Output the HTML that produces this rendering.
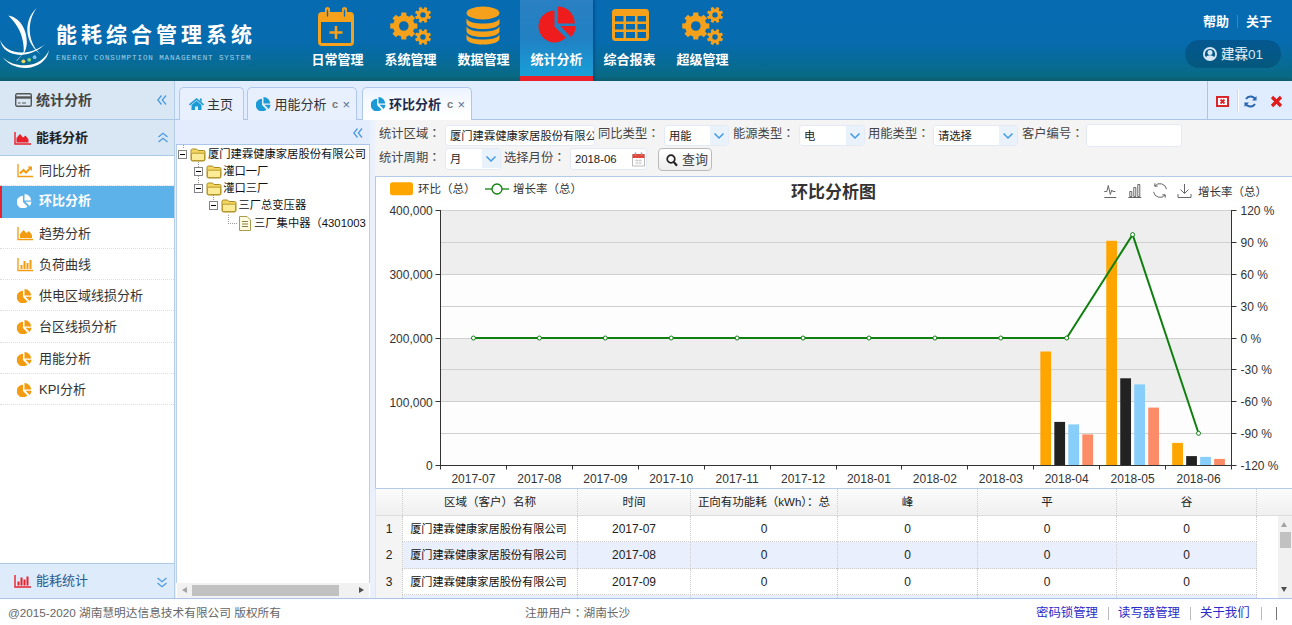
<!DOCTYPE html>
<html lang="zh-CN">
<head>
<meta charset="utf-8">
<title>能耗综合管理系统</title>
<style>
*{box-sizing:border-box;margin:0;padding:0}
html,body{width:1292px;height:625px;overflow:hidden;background:#fff}
body{font-family:"Liberation Sans","Noto Sans CJK SC",sans-serif;font-size:12px;color:#333;position:relative}
.abs{position:absolute}
i,em{font-style:normal}
#hdr{left:0;top:0;width:1292px;height:81px;background:linear-gradient(#066bb1 0,#066baf 50%,#076b9a 75%,#096a84 94%,#0d5c70 100%)}
#hdr .title{left:56px;top:21px;font-size:21px;font-weight:bold;color:#fff;letter-spacing:4px;white-space:nowrap;line-height:28px}
#hdr .sub{left:56px;top:53px;font-size:7.5px;color:#a3cfe8;letter-spacing:.93px;white-space:nowrap;line-height:10px;font-family:"Liberation Mono","Liberation Sans",monospace}
.nav{top:0;height:81px;width:73px;color:#fff;font-size:13px;font-weight:bold}
.nav span{position:absolute;left:0;right:0;top:50px;line-height:20px;text-align:center;white-space:nowrap}
.nav svg{position:absolute;left:50%}
.nav.sel{width:73px;background:linear-gradient(#2a80c3 0,#2181c2 50%,#189fd8 100%);border-bottom:5px solid #e8212a;box-shadow:2px 0 2px rgba(0,40,90,.35)}
.hlinks{left:1203px;top:12px;color:#fff;font-size:13px;font-weight:bold;line-height:20px;white-space:nowrap}
.hlinks i{display:inline-block;width:1px;height:13px;background:#3b86b8;margin:0 8px 0 8px;vertical-align:-2px}
.pill{left:1185px;top:40px;width:96px;height:28px;border-radius:14px;background:rgba(0,45,75,.3);color:#d7e7f3;font-size:13.5px;line-height:30px}
.pill svg{position:absolute;left:18px;top:7px}
.pill b{position:absolute;left:36px;top:0;font-weight:500;white-space:nowrap}
#side{left:0;top:81px;width:175px;height:517px;background:#fff;border-right:1px solid #b5cdec}
.shead{left:0;width:174px;background:#d8e7f3;border-bottom:1px solid #a9c9e8;color:#444;font-weight:bold;font-size:14px;white-space:nowrap}
.sfoot{left:0;top:482px;width:174px;height:35px;background:#deebfb;border-top:1px solid #a9c9e8;color:#2a5a8c;font-size:13px;line-height:34px;padding-left:36px}
.mi{left:0;width:174px;height:31.25px;border-bottom:1px dotted #dcdcdc;font-size:13px;color:#333;line-height:31px;padding-left:39px;white-space:nowrap}
.mi svg{position:absolute;left:17px;top:9px}
.mi.sel{background:#5db2ea;color:#fff;border-left:2px solid #e8212a;border-bottom:none;font-weight:bold;height:31.25px;line-height:30px}
.mi.sel svg{left:15px;top:8px}
.mi.sel{padding-left:37px}
#split1{left:175px;top:81px;width:1px;height:517px;background:#e6eefb}
#tabs{left:175px;top:81px;width:1117px;height:39px;background:#e0ecff;border-bottom:1px solid #a9c6e8}
.tab{top:6px;height:33px;border:1px solid #b0c7ea;border-bottom:none;border-radius:5px 5px 0 0;background:#e9f0fd;font-size:13px;color:#333;line-height:33px;white-space:nowrap}
.tab.sel{background:linear-gradient(#edf3ff,#fff 85%);font-weight:bold;height:34px;color:#1d2b4d}
.tab .ti{position:absolute;line-height:0}
.tab .tl{position:absolute;top:0}
.tab em{position:absolute;top:0;font-weight:bold;color:#777;font-size:11px}
.tab em.tx{font-size:13px;color:#5a6f8f;font-weight:normal}
#treep{left:176px;top:120px;width:194px;height:478px;background:#fff}
.thead{left:0;top:0;width:194px;height:25px;background:#e3ecfc;border-bottom:1px solid #a9c6e8}
.tbody{left:0;top:25px;width:194px;height:438px;border-left:1px solid #b9cfec;border-right:1px solid #b9cfec;overflow:hidden}
.trow{left:0;width:300px;height:17px;line-height:17px;font-size:11.3px;color:#111;white-space:nowrap}
.hsb{left:1px;top:463px;width:192px;height:15px;background:#f1f1f1}
#split2{left:370px;top:120px;width:5px;height:478px;background:#eaf1fc}
#form{left:375px;top:120px;width:917px;height:57px;background:#f4f4f4;border-bottom:1px solid #b4cbe8;padding-left:1px}
.fl{font-size:12.3px;color:#444;line-height:19px;white-space:nowrap}
.cj{font-family:"Liberation Sans","Noto Sans CJK JP",sans-serif}
.fi{background:#fff;border:1px solid #e3eaf5;border-radius:3px;font-size:11.3px;line-height:20px;padding-left:4px;color:#222;white-space:nowrap;overflow:hidden}
.btn{width:54px;height:23px;border:1px solid #bbb;border-radius:4px;background:linear-gradient(#fff,#eee);font-size:13px;line-height:21px;color:#444}
#chartp{left:375px;top:177px;width:917px;height:311px;border-left:1px solid #b4cbe8;background:#fff}
#chart{left:1px;top:0}
#grid{left:375px;top:488px;width:917px;height:110px;background:#fff;border-top:1px solid #b4cbe8;overflow:hidden;border-left:1px solid #dce6f5}
.ghead{left:0;top:0;width:916px;height:27px;background:linear-gradient(#fbfbfb,#f0f0f0);border-bottom:1px solid #ddd}
.gc{top:0;height:27px;line-height:27px;text-align:center;border-right:1px dotted #ccc;font-size:12px;color:#222;white-space:nowrap;overflow:hidden}
.grow{left:0;width:881px;height:26.4px;border-bottom:1px dotted #ccc}
.grow .gc{height:26.4px;line-height:26.4px}
.grow.alt{background:#e9effd}
.grow .rn{background:#f4f4f4}
.grow .gc:nth-child(2){font-size:11.2px;padding-right:3px;color:#111}
.ghead .gc{font-size:11.5px}
.vsb{left:902px;top:27px;width:14px;height:82px;background:#f1f1f1}
#foot{left:0;top:598px;width:1292px;height:27px;background:#fff;border-top:1px solid #a9c6e8;font-size:11.7px;color:#666;line-height:28px;white-space:nowrap}
#foot a{color:#2b2bc9;font-size:12.4px;top:0}
#foot i{top:8px;width:1px;height:13px;background:#bbb}
</style>
</head>
<body>
<div id="hdr" class="abs">
<svg class="abs" style="left:0;top:0" width="56" height="81" viewBox="0 0 56 81"><g fill="#fff"><path d="M8.300 15.400C18.500 17 27.300 28 26.800 43C26.600 47.500 25.400 51 23.600 53.800C24 49 23.600 46 23 42C21.200 30.500 15.500 22.500 8.300 15.400Z"/><path d="M36.800 8C29.700 14 27 23 27.300 31C27.700 41 34 50.500 43.500 56.500C36 51.500 30.200 42 29.800 31C29.500 23 31.700 14.500 36.800 8Z" opacity=".95"/><path d="M0.200 40C3 47.500 11 52.300 21 52.600C30 52.800 38 49.500 45.500 44C38.500 50.500 30 54.600 21 54.900C9.500 55 1.500 49 0.200 40Z"/><path d="M2.800 57.300C9 63.500 18 65.800 26 65.300C37 64.600 45.500 59 49 50C47.500 60.500 38 67.300 26.500 67.900C17 68.300 8 64.500 2.800 57.300Z"/><path d="M23.800 51.500C21.500 55 19 58 16.400 60.500L16.900 60.900C19.500 58 22 55 24.400 51.700Z" opacity=".8"/></g><circle cx="23.400" cy="61.300" r="1.900" fill="#f3d75a"/><circle cx="29.200" cy="59.800" r="1.900" fill="#86d67a"/><circle cx="34.600" cy="57.200" r="1.900" fill="#79c4f2"/></svg>
<div class="abs title">能耗综合管理系统</div>
<div class="abs sub">ENERGY CONSUMPTION MANAGEMENT SYSTEM</div>
<div class="abs nav" style="left:301px"><svg width="36" height="39" viewBox="0 0 36 39" style="margin-left:-20px;top:7px"><g fill="none" stroke="#f5a11c"><rect x="1.5" y="6.5" width="33" height="31" rx="2.5" stroke-width="3"/><path d="M1.5 11.5H34.5" stroke-width="7"/><path d="M9.5 2.5V9.5M26.5 2.5V9.5" stroke-width="5" stroke-linecap="round"/><path d="M18 19v13M11.5 25.5h13" stroke-width="2.6"/></g><path d="M9.5 3.2V9M26.5 3.2V9" stroke="#0a6db5" stroke-width="1.4" stroke-linecap="round"/></svg><span>日常管理</span></div>
<div class="abs nav" style="left:374px"><svg width="42" height="38" viewBox="0 0 42 38" style="margin-left:-21px;top:7px"><path fill-rule="evenodd" fill="#f5a11c" d="M24.26 16.31 L27.37 16.52 L27.37 21.48 L24.26 21.69 L23.10 24.50 L25.15 26.84 L21.64 30.35 L19.30 28.30 L16.49 29.46 L16.28 32.57 L11.32 32.57 L11.11 29.46 L8.30 28.30 L5.96 30.35 L2.45 26.84 L4.50 24.50 L3.34 21.69 L0.23 21.48 L0.23 16.52 L3.34 16.31 L4.50 13.50 L2.45 11.16 L5.96 7.65 L8.30 9.70 L11.11 8.54 L11.32 5.43 L16.28 5.43 L16.49 8.54 L19.30 9.70 L21.64 7.65 L25.15 11.16 L23.10 13.50Z M18.60 19.00 A4.80 4.80 0 1 0 9.00 19.00 A4.80 4.80 0 1 0 18.60 19.00 Z M39.04 8.76 L41.02 9.62 L39.89 12.35 L37.88 11.56 L36.66 12.78 L37.45 14.79 L34.72 15.92 L33.86 13.94 L32.14 13.94 L31.28 15.92 L28.55 14.79 L29.34 12.78 L28.12 11.56 L26.11 12.35 L24.98 9.62 L26.96 8.76 L26.96 7.04 L24.98 6.18 L26.11 3.45 L28.12 4.24 L29.34 3.02 L28.55 1.01 L31.28 -0.12 L32.14 1.86 L33.86 1.86 L34.72 -0.12 L37.45 1.01 L36.66 3.02 L37.88 4.24 L39.89 3.45 L41.02 6.18 L39.04 7.04Z M35.70 7.90 A2.70 2.70 0 1 0 30.30 7.90 A2.70 2.70 0 1 0 35.70 7.90 Z M39.04 30.86 L41.02 31.72 L39.89 34.45 L37.88 33.66 L36.66 34.88 L37.45 36.89 L34.72 38.02 L33.86 36.04 L32.14 36.04 L31.28 38.02 L28.55 36.89 L29.34 34.88 L28.12 33.66 L26.11 34.45 L24.98 31.72 L26.96 30.86 L26.96 29.14 L24.98 28.28 L26.11 25.55 L28.12 26.34 L29.34 25.12 L28.55 23.11 L31.28 21.98 L32.14 23.96 L33.86 23.96 L34.72 21.98 L37.45 23.11 L36.66 25.12 L37.88 26.34 L39.89 25.55 L41.02 28.28 L39.04 29.14Z M35.70 30.00 A2.70 2.70 0 1 0 30.30 30.00 A2.70 2.70 0 1 0 35.70 30.00 Z"/></svg><span>系统管理</span></div>
<div class="abs nav" style="left:447px"><svg width="34" height="39" viewBox="0 0 34 39" style="margin-left:-18px;top:6px"><g fill="#f5a11c"><ellipse cx="17" cy="7" rx="16.5" ry="6.5"/><path d="M0.5 12.5c2 4 9 5 16.500 5s14.500-1 16.500-5v5c-1 4-9 5.500-16.500 5.500s-15.500-1.500-16.500-5.500z"/><path d="M0.500 20.500c2 4 9 5 16.500 5s14.500-1 16.500-5v5c-1 4-9 5.500-16.500 5.500s-15.500-1.500-16.500-5.500z"/><path d="M0.500 28.500c2 4 9 5 16.500 5s14.500-1 16.500-5v4.500c-1 4-9 5.500-16.500 5.500s-15.500-1.500-16.500-5.500z"/></g></svg><span>数据管理</span></div>
<div class="abs nav sel" style="left:520px"><svg width="39" height="37" viewBox="0 0 39 37" style="margin-left:-19px;top:6px"><g fill="#ee1c1c"><path d="M16.500 4.500V20.500L27.800 31.800A16 16 0 1 1 16.500 4.500z"/><path d="M19.800 0.400A17 17 0 0 1 36.800 17.400H19.800z"/><path d="M22.300 20H37.800A16 16 0 0 1 33 31z"/></g></svg><span>统计分析</span></div>
<div class="abs nav" style="left:593px"><svg width="37" height="32" viewBox="0 0 37 32" style="margin-left:-18px;top:9px"><path fill-rule="evenodd" fill="#f5a11c" d="M3.500 0h30a3.500 3.500 0 0 1 3.500 3.500v25a3.500 3.500 0 0 1-3.500 3.500h-30a3.500 3.500 0 0 1-3.500-3.500v-25a3.500 3.500 0 0 1 3.500-3.500z M3 7h8.500v5.500h-8.500z M14 7h9v5.500h-9z M25.500 7h8.500v5.500h-8.500z M3 15h8.500v5.500h-8.500z M14 15h9v5.500h-9z M25.500 15h8.500v5.500h-8.500z M3 23h8.500v6h-8.500z M14 23h9v6h-9z M25.500 23h8.500v6h-8.500z"/></svg><span>综合报表</span></div>
<div class="abs nav" style="left:666px"><svg width="42" height="38" viewBox="0 0 42 38" style="margin-left:-21px;top:7px"><path fill-rule="evenodd" fill="#f5a11c" d="M24.26 16.31 L27.37 16.52 L27.37 21.48 L24.26 21.69 L23.10 24.50 L25.15 26.84 L21.64 30.35 L19.30 28.30 L16.49 29.46 L16.28 32.57 L11.32 32.57 L11.11 29.46 L8.30 28.30 L5.96 30.35 L2.45 26.84 L4.50 24.50 L3.34 21.69 L0.23 21.48 L0.23 16.52 L3.34 16.31 L4.50 13.50 L2.45 11.16 L5.96 7.65 L8.30 9.70 L11.11 8.54 L11.32 5.43 L16.28 5.43 L16.49 8.54 L19.30 9.70 L21.64 7.65 L25.15 11.16 L23.10 13.50Z M18.60 19.00 A4.80 4.80 0 1 0 9.00 19.00 A4.80 4.80 0 1 0 18.60 19.00 Z M39.04 8.76 L41.02 9.62 L39.89 12.35 L37.88 11.56 L36.66 12.78 L37.45 14.79 L34.72 15.92 L33.86 13.94 L32.14 13.94 L31.28 15.92 L28.55 14.79 L29.34 12.78 L28.12 11.56 L26.11 12.35 L24.98 9.62 L26.96 8.76 L26.96 7.04 L24.98 6.18 L26.11 3.45 L28.12 4.24 L29.34 3.02 L28.55 1.01 L31.28 -0.12 L32.14 1.86 L33.86 1.86 L34.72 -0.12 L37.45 1.01 L36.66 3.02 L37.88 4.24 L39.89 3.45 L41.02 6.18 L39.04 7.04Z M35.70 7.90 A2.70 2.70 0 1 0 30.30 7.90 A2.70 2.70 0 1 0 35.70 7.90 Z M39.04 30.86 L41.02 31.72 L39.89 34.45 L37.88 33.66 L36.66 34.88 L37.45 36.89 L34.72 38.02 L33.86 36.04 L32.14 36.04 L31.28 38.02 L28.55 36.89 L29.34 34.88 L28.12 33.66 L26.11 34.45 L24.98 31.72 L26.96 30.86 L26.96 29.14 L24.98 28.28 L26.11 25.55 L28.12 26.34 L29.34 25.12 L28.55 23.11 L31.28 21.98 L32.14 23.96 L33.86 23.96 L34.72 21.98 L37.45 23.11 L36.66 25.12 L37.88 26.34 L39.89 25.55 L41.02 28.28 L39.04 29.14Z M35.70 30.00 A2.70 2.70 0 1 0 30.30 30.00 A2.70 2.70 0 1 0 35.70 30.00 Z"/></svg><span>超级管理</span></div>

<div class="abs hlinks"><span>帮助</span><i></i><span>关于</span></div>
<div class="abs pill"><svg width="14" height="14" viewBox="0 0 14 14"><path fill-rule="evenodd" fill="#d7e7f3" d="M7 0a7 7 0 1 1 0 14a7 7 0 0 1 0-14z M7 1.900a5.100 5.100 0 0 0-4 8.300c0.800-1.200 2.300-1.900 4-1.900s3.200 0.700 4 1.900a5.100 5.100 0 0 0-4-8.300z M7 3a2.500 2.500 0 1 1 0 5a2.500 2.500 0 0 1 0-5z"/></svg><b>建霖01</b></div>
</div>
<div id="side" class="abs">
<div class="abs shead" style="top:0;height:39px;line-height:38px;padding-left:36px"><svg class="abs" style="left:15px;top:12px" width="17" height="14" viewBox="0 0 17 14"><rect x=".7" y=".7" width="15.600" height="12.600" rx="1.500" fill="none" stroke="#555" stroke-width="1.400"/><path d="M1 4.500h15" stroke="#555" stroke-width="2.400"/><path d="M3 10h2.500M7 10h4" stroke="#555" stroke-width="1.200"/></svg>统计分析<svg class="abs" style="left:157px;top:14px" width="10" height="10" viewBox="0 0 10 10"><path d="M4.500 .5L.8 5l3.700 4.500M9 .5L5.300 5 9 9.500" fill="none" stroke="#4d9be0" stroke-width="1.300"/></svg></div>
<div class="abs shead" style="top:39px;height:36px;line-height:35px;padding-left:36px;font-size:13px;color:#222"><svg class="abs" style="left:14px;top:12px" width="17" height="13" viewBox="0 0 17 13"><path d="M1 0v12h16" fill="none" stroke="#e8212a" stroke-width="1.400"/><path d="M2.500 10.500v-4.500l3.500-4 3 3.500 2.500-2 3 4v3z" fill="#e8212a"/></svg>能耗分析<svg class="abs" style="left:158px;top:12px" width="10" height="11" viewBox="0 0 10 11"><path d="M.5 5L5 1.300 9.500 5M.5 10L5 6.300 9.500 10" fill="none" stroke="#4d9be0" stroke-width="1.300"/></svg></div>
<div class="abs mi" style="top:74.00px"><svg width="16" height="14" viewBox="0 0 16 14"><path d="M1 0v12.500h15" fill="none" stroke="#f39c12" stroke-width="1.300"/><path d="M3 9.500l3.500-3.500 2.500 2.500 4.500-4.500" fill="none" stroke="#f39c12" stroke-width="2"/><path d="M10.500 2.500h4.500v4.500z" fill="#f39c12"/></svg>同比分析</div>
<div class="abs mi sel" style="top:105.25px"><svg width="15" height="14" viewBox="0 0 15 14"><g fill="#fff"><path d="M6 1.700V8l4.500 4.400A6.300 6.300 0 1 1 6 1.700z"/><path d="M7.500 0A6.700 6.700 0 0 1 14.200 6.600H7.500z"/><path d="M8.500 7.800h6A6.300 6.300 0 0 1 12.600 12z"/></g></svg>环比分析</div>
<div class="abs mi" style="top:136.50px"><svg width="16" height="14" viewBox="0 0 16 14"><path d="M1 0v12.500h15" fill="none" stroke="#f39c12" stroke-width="1.300"/><path d="M3 11v-4l3.500-4 3 3 2.500-2 3 4v3z" fill="#f39c12"/></svg>趋势分析</div>
<div class="abs mi" style="top:167.75px"><svg width="16" height="14" viewBox="0 0 16 14"><path d="M1 0v12.500h15" fill="none" stroke="#f39c12" stroke-width="1.300"/><path d="M3.500 11v-4h2v4zM6.500 11v-8h2v8zM9.500 11v-6h2v6zM12.500 11v-9h2v9z" fill="#f39c12"/></svg>负荷曲线</div>
<div class="abs mi" style="top:199.00px"><svg width="15" height="14" viewBox="0 0 15 14"><g fill="#f39c12"><path d="M6 1.700V8l4.500 4.400A6.300 6.300 0 1 1 6 1.700z"/><path d="M7.500 0A6.700 6.700 0 0 1 14.200 6.600H7.500z"/><path d="M8.500 7.800h6A6.300 6.300 0 0 1 12.600 12z"/></g></svg>供电区域线损分析</div>
<div class="abs mi" style="top:230.25px"><svg width="15" height="14" viewBox="0 0 15 14"><g fill="#f39c12"><path d="M6 1.700V8l4.500 4.400A6.300 6.300 0 1 1 6 1.700z"/><path d="M7.500 0A6.700 6.700 0 0 1 14.200 6.600H7.500z"/><path d="M8.500 7.800h6A6.300 6.300 0 0 1 12.600 12z"/></g></svg>台区线损分析</div>
<div class="abs mi" style="top:261.50px"><svg width="15" height="14" viewBox="0 0 15 14"><g fill="#f39c12"><path d="M6 1.700V8l4.500 4.400A6.300 6.300 0 1 1 6 1.700z"/><path d="M7.500 0A6.700 6.700 0 0 1 14.200 6.600H7.500z"/><path d="M8.500 7.800h6A6.300 6.300 0 0 1 12.600 12z"/></g></svg>用能分析</div>
<div class="abs mi" style="top:292.75px"><svg width="15" height="14" viewBox="0 0 15 14"><g fill="#f39c12"><path d="M6 1.700V8l4.500 4.400A6.300 6.300 0 1 1 6 1.700z"/><path d="M7.500 0A6.700 6.700 0 0 1 14.200 6.600H7.500z"/><path d="M8.500 7.800h6A6.300 6.300 0 0 1 12.600 12z"/></g></svg>KPI分析</div>
<div class="abs sfoot"><svg class="abs" style="left:14px;top:11px" width="17" height="13" viewBox="0 0 17 13"><path d="M1 0v12h16" fill="none" stroke="#e8212a" stroke-width="1.400"/><path d="M3.500 10.500v-4h2v4zM6.500 10.500v-8h2v8zM9.500 10.500v-6h2v6zM12.500 10.500v-9h2v9z" fill="#e8212a"/></svg>能耗统计<svg class="abs" style="left:157px;top:13px" width="10" height="11" viewBox="0 0 10 11"><path d="M.5 1L5 4.700 9.500 1M.5 6L5 9.700 9.500 6" fill="none" stroke="#4d9be0" stroke-width="1.300"/></svg></div>
</div>
<div id="split1" class="abs"></div>
<div id="tabs" class="abs">
<div class="abs tab" style="left:4px;width:65px"><span class="ti" style="left:9px;top:10px"><svg width="15" height="12" viewBox="0 0 15 12"><path fill="#1c9ad6" d="M7.500 0l7.500 6.300-1 1.100L7.500 2 1 7.400 0 6.300z M7.500 2.800l5 4.200v5h-3.500v-3.500h-3v3.500H2.500V7z M10.800 .6h1.900v3.300l-1.900-1.600z"/></svg></span><span class="tl" style="left:27px">主页</span></div>
<div class="abs tab" style="left:72px;width:110px"><span class="ti" style="left:8px;top:9px"><svg width="15" height="14" viewBox="0 0 15 14"><g fill="#1c9ad6"><path d="M6 1.700V8l4.500 4.400A6.300 6.300 0 1 1 6 1.700z"/><path d="M7.500 0A6.700 6.700 0 0 1 14.200 6.600H7.500z"/><path d="M8.500 7.800h6A6.300 6.300 0 0 1 12.600 12z"/></g></svg></span><span class="tl" style="left:26.500px">用能分析</span><em class="tt" style="left:84px">c</em><em class="tx" style="left:94.500px">×</em></div>
<div class="abs tab sel" style="left:187px;width:110px"><span class="ti" style="left:8px;top:9px"><svg width="15" height="14" viewBox="0 0 15 14"><g fill="#1c9ad6"><path d="M6 1.700V8l4.500 4.400A6.300 6.300 0 1 1 6 1.700z"/><path d="M7.500 0A6.700 6.700 0 0 1 14.200 6.600H7.500z"/><path d="M8.500 7.800h6A6.300 6.300 0 0 1 12.600 12z"/></g></svg></span><span class="tl" style="left:26px">环比分析</span><em class="tt" style="left:84px">c</em><em class="tx" style="left:94.500px">×</em></div>
<div class="abs" style="left:1032px;top:0;width:85px;height:38px;border-left:1px solid #a9c6e8;background:#e0ecff"></div><svg class="abs" style="left:1041px;top:15px" width="13" height="11" viewBox="0 0 13 11"><rect x="1" y="1" width="11" height="9" fill="#fff" stroke="#d9262c" stroke-width="2"/><path d="M4.500 3.500l4 4M8.500 3.500l-4 4" stroke="#d9262c" stroke-width="1.800"/></svg><div class="abs" style="left:1062px;top:9px;width:1px;height:22px;background:#fff;border-left:1px solid #cfdcf0;box-sizing:content-box"></div><svg class="abs" style="left:1069px;top:14px" width="13" height="13" viewBox="0 0 13 13"><g fill="none" stroke="#2c66ae" stroke-width="2"><path d="M11.500 5A5.300 5.300 0 0 0 2 4"/><path d="M1.500 8A5.300 5.300 0 0 0 11 9"/></g><path d="M12.500 1v4.500H8z M.5 12V7.500H5z" fill="#2c66ae"/></svg><svg class="abs" style="left:1095px;top:14px" width="13" height="13" viewBox="0 0 13 13"><path d="M2 2l9 9M11 2l-9 9" stroke="#e01b1b" stroke-width="3.200"/></svg></div>
<div id="treep" class="abs">
<div class="abs thead"><svg class="abs" style="left:177px;top:8px" width="10" height="10" viewBox="0 0 10 10"><path d="M4.500 .5L.8 5l3.700 4.500M9 .5L5.300 5 9 9.500" fill="none" stroke="#4d9be0" stroke-width="1.300"/></svg></div>
<div class="abs tbody">
<i class="abs" style="left:5.5px;top:-6px;height:9px;border-left:1px dotted #999"></i><i class="abs" style="left:20.5px;top:14px;height:28px;border-left:1px dotted #999"></i><i class="abs" style="left:36px;top:49px;height:8px;border-left:1px dotted #999"></i><div class="abs trow" style="top:0.8px"><svg class="abs" style="left:1.4px;top:4px" width="9" height="9" viewBox="0 0 9 9"><rect x=".5" y=".5" width="8" height="8" fill="#fff" stroke="#848484"/><path d="M2 4.500h5" stroke="#000" stroke-width="1"/></svg><svg class="abs" style="left:13.4px;top:1px" width="16" height="15" viewBox="0 0 16 15"><path d="M1 3.500a1.500 1.500 0 0 1 1.500-1.500h4l1.500 1.500h5.500a1.500 1.500 0 0 1 1.500 1.500v7.500a1.500 1.500 0 0 1-1.500 1.500h-11a1.500 1.500 0 0 1-1.500-1.500z" fill="#f3d561" stroke="#a98a1c" stroke-width="1"/><path d="M1.500 7.500a1.300 1.300 0 0 1 1.300-1.300h10.400a1.300 1.300 0 0 1 1.300 1.300v4.700a1.300 1.300 0 0 1-1.300 1.300h-10.400a1.300 1.300 0 0 1-1.300-1.300z" fill="#fbea96" stroke="#a98a1c" stroke-width=".8"/></svg><span class="abs" style="left:31.0px">厦门建霖健康家居股份有限公司</span></div>
<div class="abs trow" style="top:18.0px"><svg class="abs" style="left:16.6px;top:4px" width="9" height="9" viewBox="0 0 9 9"><rect x=".5" y=".5" width="8" height="8" fill="#fff" stroke="#848484"/><path d="M2 4.500h5" stroke="#000" stroke-width="1"/></svg><svg class="abs" style="left:28.6px;top:1px" width="16" height="15" viewBox="0 0 16 15"><path d="M1 3.500a1.500 1.500 0 0 1 1.500-1.500h4l1.500 1.500h5.500a1.500 1.500 0 0 1 1.500 1.500v7.500a1.500 1.500 0 0 1-1.500 1.500h-11a1.500 1.500 0 0 1-1.500-1.500z" fill="#f3d561" stroke="#a98a1c" stroke-width="1"/><path d="M1.500 7.500a1.300 1.300 0 0 1 1.300-1.300h10.400a1.300 1.300 0 0 1 1.300 1.300v4.700a1.300 1.300 0 0 1-1.300 1.300h-10.400a1.300 1.300 0 0 1-1.300-1.300z" fill="#fbea96" stroke="#a98a1c" stroke-width=".8"/></svg><span class="abs" style="left:46.2px">灌口一厂</span></div>
<div class="abs trow" style="top:35.2px"><svg class="abs" style="left:16.6px;top:4px" width="9" height="9" viewBox="0 0 9 9"><rect x=".5" y=".5" width="8" height="8" fill="#fff" stroke="#848484"/><path d="M2 4.500h5" stroke="#000" stroke-width="1"/></svg><svg class="abs" style="left:28.6px;top:1px" width="16" height="15" viewBox="0 0 16 15"><path d="M1 3.500a1.500 1.500 0 0 1 1.500-1.500h4l1.500 1.500h5.500a1.500 1.500 0 0 1 1.500 1.500v7.500a1.500 1.500 0 0 1-1.500 1.500h-11a1.500 1.500 0 0 1-1.500-1.500z" fill="#f3d561" stroke="#a98a1c" stroke-width="1"/><path d="M1.500 7.500a1.300 1.300 0 0 1 1.300-1.300h10.400a1.300 1.300 0 0 1 1.300 1.300v4.700a1.300 1.300 0 0 1-1.300 1.300h-10.400a1.300 1.300 0 0 1-1.300-1.300z" fill="#fbea96" stroke="#a98a1c" stroke-width=".8"/></svg><span class="abs" style="left:46.2px">灌口三厂</span></div>
<div class="abs trow" style="top:52.4px"><svg class="abs" style="left:31.8px;top:4px" width="9" height="9" viewBox="0 0 9 9"><rect x=".5" y=".5" width="8" height="8" fill="#fff" stroke="#848484"/><path d="M2 4.500h5" stroke="#000" stroke-width="1"/></svg><svg class="abs" style="left:43.8px;top:1px" width="16" height="15" viewBox="0 0 16 15"><path d="M1 3.500a1.500 1.500 0 0 1 1.500-1.500h4l1.500 1.500h5.500a1.500 1.500 0 0 1 1.500 1.500v7.500a1.500 1.500 0 0 1-1.500 1.500h-11a1.500 1.500 0 0 1-1.500-1.500z" fill="#f3d561" stroke="#a98a1c" stroke-width="1"/><path d="M1.500 7.500a1.300 1.300 0 0 1 1.300-1.300h10.400a1.300 1.300 0 0 1 1.300 1.300v4.700a1.300 1.300 0 0 1-1.300 1.300h-10.400a1.300 1.300 0 0 1-1.300-1.300z" fill="#fbea96" stroke="#a98a1c" stroke-width=".8"/></svg><span class="abs" style="left:61.4px">三厂总变压器</span></div>
<div class="abs trow" style="top:69.6px"><i class="abs" style="left:51.0px;top:0;height:9px;border-left:1px dotted #999;width:9px;border-bottom:1px dotted #999"></i><svg class="abs" style="left:61.5px;top:1px" width="12" height="15" viewBox="0 0 12 15"><path d="M.5 .5h7.500l3.500 3.500v10.500h-11z" fill="#fffbe0" stroke="#a89c50" stroke-width="1"/><path d="M3 5.500h6M3 8h6M3 10.500h6" stroke="#8a8250" stroke-width="1"/></svg><span class="abs" style="left:77.0px">三厂集中器（4301003</span></div>
</div>
<div class="abs hsb"><b class="abs" style="left:5px;top:4px;border:3.500px solid transparent;border-right:5px solid #a3a3a3;border-left:none"></b><i class="abs" style="left:15px;top:2px;width:147px;height:11px;background:#c1c1c1"></i><b class="abs" style="left:182px;top:4px;border:3.500px solid transparent;border-left:5px solid #505050;border-right:none"></b></div>
</div>
<div id="split2" class="abs"></div>
<div id="form" class="abs">
<span class="abs fl" style="left:4px;top:5px">统计区域<span class="cj" lang="ja">：</span></span><span class="abs fi" style="left:70px;top:5px;width:150px;height:21px">厦门建霖健康家居股份有限公</span><span class="abs fl" style="left:223px;top:5px">同比类型<span class="cj" lang="ja">：</span></span><span class="abs fi" style="left:289px;top:5px;width:65px;height:21px">用能<svg class="abs" style="right:0;top:0" width="18" height="19" viewBox="0 0 18 19"><rect width="18" height="19" fill="#e9f1fb"/><path d="M4.500 7.500l4.500 4.500 4.500-4.500" fill="none" stroke="#3f9ae6" stroke-width="1.500"/></svg></span><span class="abs fl" style="left:358px;top:5px">能源类型<span class="cj" lang="ja">：</span></span><span class="abs fi" style="left:424px;top:5px;width:66px;height:21px">电<svg class="abs" style="right:0;top:0" width="18" height="19" viewBox="0 0 18 19"><rect width="18" height="19" fill="#e9f1fb"/><path d="M4.500 7.500l4.500 4.500 4.500-4.500" fill="none" stroke="#3f9ae6" stroke-width="1.500"/></svg></span><span class="abs fl" style="left:493px;top:5px">用能类型<span class="cj" lang="ja">：</span></span><span class="abs fi" style="left:558px;top:5px;width:85px;height:21px">请选择<svg class="abs" style="right:0;top:0" width="18" height="19" viewBox="0 0 18 19"><rect width="18" height="19" fill="#e9f1fb"/><path d="M4.500 7.500l4.500 4.500 4.500-4.500" fill="none" stroke="#3f9ae6" stroke-width="1.500"/></svg></span><span class="abs fl" style="left:647px;top:5px">客户编号<span class="cj" lang="ja">：</span></span><span class="abs fi" style="left:711px;top:4px;width:96px;height:23px"></span><span class="abs fl" style="left:4px;top:29px">统计周期<span class="cj" lang="ja">：</span></span><span class="abs fi" style="left:70px;top:28px;width:56px;height:22px">月<svg class="abs" style="right:0;top:0" width="18" height="19" viewBox="0 0 18 19"><rect width="18" height="19" fill="#e9f1fb"/><path d="M4.500 7.500l4.500 4.500 4.500-4.500" fill="none" stroke="#3f9ae6" stroke-width="1.500"/></svg></span><span class="abs fl" style="left:129px;top:29px">选择月份<span class="cj" lang="ja">：</span></span><span class="abs fi" style="left:195px;top:28px;width:77px;height:22px">2018-06</span><svg class="abs" style="left:257px;top:32px" width="13" height="15" viewBox="0 0 13 14"><rect x=".5" y="2.500" width="12" height="11" fill="#fff" stroke="#bbb"/><rect x=".5" y="1.500" width="12" height="4" fill="#e2483c"/><path d="M3.500 0v3M9.500 0v3" stroke="#999" stroke-width="1.500"/><path d="M3 8h7M3 10.500h7M5 6.500v5.500M8 6.500v5.500" stroke="#ccc" stroke-width=".8"/></svg><span class="abs btn" style="left:283px;top:28px"><svg class="abs" style="left:7px;top:5px" width="12" height="13" viewBox="0 0 12 13"><circle cx="5" cy="5" r="3.800" fill="none" stroke="#222" stroke-width="1.700"/><path d="M7.800 8l3.200 3.700" stroke="#222" stroke-width="2.200"/></svg><span class="abs" style="left:23px;top:0">查询</span></span></div>
<div id="chartp" class="abs">
<svg id="chart" class="abs" width="915" height="311" viewBox="0 0 915 311" font-family="Liberation Sans, Noto Sans CJK SC, sans-serif" font-size="12">
<rect width="915" height="311" fill="#fff"/>
<rect x="63.5" y="33.5" width="791" height="63.75" fill="#eeeeee"/>
<rect x="63.5" y="97.25" width="791" height="63.75" fill="#fdfdfd"/>
<rect x="63.5" y="161" width="791" height="63.75" fill="#eeeeee"/>
<rect x="63.5" y="224.75" width="791" height="63.75" fill="#fdfdfd"/>
<path d="M63.5 33.5H854.5" stroke="#d0d0d0" stroke-width="1"/>
<path d="M63.5 65.5H854.5" stroke="#d0d0d0" stroke-width="1"/>
<path d="M63.5 97.5H854.5" stroke="#d0d0d0" stroke-width="1"/>
<path d="M63.5 129.5H854.5" stroke="#d0d0d0" stroke-width="1"/>
<path d="M63.5 161.5H854.5" stroke="#d0d0d0" stroke-width="1"/>
<path d="M63.5 192.5H854.5" stroke="#d0d0d0" stroke-width="1"/>
<path d="M63.5 224.5H854.5" stroke="#d0d0d0" stroke-width="1"/>
<path d="M63.5 256.5H854.5" stroke="#d0d0d0" stroke-width="1"/>
<path d="M63.5 288.5H854.5" stroke="#d0d0d0" stroke-width="1"/>
<rect x="663.34" y="174.5" width="10.76" height="114" fill="#ffa500"/>
<rect x="677.33" y="244.9" width="10.76" height="43.6" fill="#222222"/>
<rect x="691.32" y="247.4" width="10.76" height="41.1" fill="#87cefa"/>
<rect x="705.31" y="257.4" width="10.76" height="31.1" fill="#fc8b68"/>
<rect x="729.26" y="63.8" width="10.76" height="224.7" fill="#ffa500"/>
<rect x="743.25" y="201.3" width="10.76" height="87.2" fill="#222222"/>
<rect x="757.24" y="207.4" width="10.76" height="81.1" fill="#87cefa"/>
<rect x="771.23" y="230.6" width="10.76" height="57.9" fill="#fc8b68"/>
<rect x="795.18" y="265.9" width="10.76" height="22.6" fill="#ffa500"/>
<rect x="809.17" y="279.1" width="10.76" height="9.4" fill="#222222"/>
<rect x="823.16" y="279.9" width="10.76" height="8.6" fill="#87cefa"/>
<rect x="837.15" y="281.9" width="10.76" height="6.6" fill="#fc8b68"/>
<path d="M63.5 33V289 M854.5 33V289 M63.5 288.5H854.5" stroke="#333" stroke-width="1" fill="none"/>
<path d="M58.5 33.5H63.5 M58.5 97.5H63.5 M58.5 161.5H63.5 M58.5 224.5H63.5 M58.5 288.5H63.5 M854.5 33.5H859.5 M854.5 65.5H859.5 M854.5 97.5H859.5 M854.5 129.5H859.5 M854.5 161.5H859.5 M854.5 192.5H859.5 M854.5 224.5H859.5 M854.5 256.5H859.5 M854.5 288.5H859.5 M63.5 288.5V292.5 M129.5 288.5V292.5 M195.5 288.5V292.5 M261.5 288.5V292.5 M327.5 288.5V292.5 M393.5 288.5V292.5 M459.5 288.5V292.5 M524.5 288.5V292.5 M590.5 288.5V292.5 M656.5 288.5V292.5 M722.5 288.5V292.5 M788.5 288.5V292.5 M854.5 288.5V292.5" stroke="#333" stroke-width="1" fill="none"/>
<text x="55.8" y="38.3" text-anchor="end" fill="#333">400,000</text>
<text x="55.8" y="102.05" text-anchor="end" fill="#333">300,000</text>
<text x="55.8" y="165.8" text-anchor="end" fill="#333">200,000</text>
<text x="55.8" y="229.55" text-anchor="end" fill="#333">100,000</text>
<text x="55.8" y="293.3" text-anchor="end" fill="#333">0</text>
<text x="863.5" y="38" fill="#333">120 %</text>
<text x="863.5" y="69.88" fill="#333">90 %</text>
<text x="863.5" y="101.75" fill="#333">60 %</text>
<text x="863.5" y="133.62" fill="#333">30 %</text>
<text x="863.5" y="165.5" fill="#333">0 %</text>
<text x="863.5" y="197.38" fill="#333">-30 %</text>
<text x="863.5" y="229.25" fill="#333">-60 %</text>
<text x="863.5" y="261.12" fill="#333">-90 %</text>
<text x="863.5" y="293" fill="#333">-120 %</text>
<text x="96.46" y="306" text-anchor="middle" fill="#333">2017-07</text>
<text x="162.38" y="306" text-anchor="middle" fill="#333">2017-08</text>
<text x="228.29" y="306" text-anchor="middle" fill="#333">2017-09</text>
<text x="294.21" y="306" text-anchor="middle" fill="#333">2017-10</text>
<text x="360.12" y="306" text-anchor="middle" fill="#333">2017-11</text>
<text x="426.04" y="306" text-anchor="middle" fill="#333">2017-12</text>
<text x="491.96" y="306" text-anchor="middle" fill="#333">2018-01</text>
<text x="557.88" y="306" text-anchor="middle" fill="#333">2018-02</text>
<text x="623.79" y="306" text-anchor="middle" fill="#333">2018-03</text>
<text x="689.71" y="306" text-anchor="middle" fill="#333">2018-04</text>
<text x="755.62" y="306" text-anchor="middle" fill="#333">2018-05</text>
<text x="821.54" y="306" text-anchor="middle" fill="#333">2018-06</text>
<polyline fill="none" stroke="#0f800f" stroke-width="2" stroke-linejoin="round" points="96.46,161 162.38,161 228.29,161 294.21,161 360.12,161 426.04,161 491.96,161 557.88,161 623.79,161 689.71,161 755.62,57.6 821.54,256.3"/>
<circle cx="96.46" cy="161" r="2" fill="#fff" stroke="#0f800f" stroke-width="1"/>
<circle cx="162.38" cy="161" r="2" fill="#fff" stroke="#0f800f" stroke-width="1"/>
<circle cx="228.29" cy="161" r="2" fill="#fff" stroke="#0f800f" stroke-width="1"/>
<circle cx="294.21" cy="161" r="2" fill="#fff" stroke="#0f800f" stroke-width="1"/>
<circle cx="360.12" cy="161" r="2" fill="#fff" stroke="#0f800f" stroke-width="1"/>
<circle cx="426.04" cy="161" r="2" fill="#fff" stroke="#0f800f" stroke-width="1"/>
<circle cx="491.96" cy="161" r="2" fill="#fff" stroke="#0f800f" stroke-width="1"/>
<circle cx="557.88" cy="161" r="2" fill="#fff" stroke="#0f800f" stroke-width="1"/>
<circle cx="623.79" cy="161" r="2" fill="#fff" stroke="#0f800f" stroke-width="1"/>
<circle cx="689.71" cy="161" r="2" fill="#fff" stroke="#0f800f" stroke-width="1"/>
<circle cx="755.62" cy="57.6" r="2" fill="#fff" stroke="#0f800f" stroke-width="1"/>
<circle cx="821.54" cy="256.3" r="2" fill="#fff" stroke="#0f800f" stroke-width="1"/>
<rect x="13" y="5.2" width="23" height="13" rx="2.500" fill="#ffa500"/>
<text x="41" y="16.3" fill="#333" font-size="11.500">环比（总）</text>
<path d="M108 12h24" stroke="#0f800f" stroke-width="1.300"/><circle cx="120" cy="12" r="5" fill="#fff" stroke="#0f800f" stroke-width="1.300"/>
<text x="136" y="16.3" fill="#333" font-size="11.500">增长率（总）</text>
<text x="456.5" y="20.5" text-anchor="middle" font-size="17" font-weight="bold" fill="#333">环比分析图</text>
<g fill="none" stroke="#666" stroke-width="1" transform="translate(727.3 7)"><path d="M0 7.500h2.500l1.500-6 2 9 1.500-4.500 1 1.500h2.500M0 13.500h12"/></g>
<g fill="none" stroke="#666" stroke-width="1" transform="translate(751.3 7)"><path d="M1.500 12.500v-5h2v5zM5.500 12.500v-9h2v9zM9.500 12.500v-12h2v12zM0 13.500h13"/></g>
<g fill="none" stroke="#666" stroke-width="1" transform="translate(775.5 6)"><path d="M14 6.200A6.700 6.700 0 0 0 2.300 3M1 8.800A6.700 6.700 0 0 0 12.700 12M2.300 .3v2.900h2.900M12.700 14.700v-2.900h-2.900"/></g>
<g fill="none" stroke="#666" stroke-width="1" transform="translate(800.5 7)"><path d="M7 0v9M3 5.500l4 4 4-4M.5 10v3.500h13v-3.500"/></g>
<text x="821" y="19.3" fill="#333" font-size="11.500">增长率（总）</text>
</svg>
</div>
<div id="grid" class="abs">
<div class="abs ghead"><span class="abs gc" style="left:0px;width:27px"></span><span class="abs gc" style="left:27px;width:175px">区域（客户）名称</span><span class="abs gc" style="left:202px;width:113px">时间</span><span class="abs gc" style="left:315px;width:147px">正向有功能耗（kWh）：总</span><span class="abs gc" style="left:462px;width:140px">峰</span><span class="abs gc" style="left:602px;width:139px">平</span><span class="abs gc" style="left:741px;width:140px">谷</span></div>
<div class="abs grow" style="top:27.0px"><span class="abs gc rn" style="left:0px;width:27px">1</span><span class="abs gc" style="left:27px;width:175px">厦门建霖健康家居股份有限公司</span><span class="abs gc" style="left:202px;width:113px">2017-07</span><span class="abs gc" style="left:315px;width:147px">0</span><span class="abs gc" style="left:462px;width:140px">0</span><span class="abs gc" style="left:602px;width:139px">0</span><span class="abs gc" style="left:741px;width:140px">0</span></div>
<div class="abs grow alt" style="top:53.4px"><span class="abs gc rn" style="left:0px;width:27px">2</span><span class="abs gc" style="left:27px;width:175px">厦门建霖健康家居股份有限公司</span><span class="abs gc" style="left:202px;width:113px">2017-08</span><span class="abs gc" style="left:315px;width:147px">0</span><span class="abs gc" style="left:462px;width:140px">0</span><span class="abs gc" style="left:602px;width:139px">0</span><span class="abs gc" style="left:741px;width:140px">0</span></div>
<div class="abs grow" style="top:79.8px"><span class="abs gc rn" style="left:0px;width:27px">3</span><span class="abs gc" style="left:27px;width:175px">厦门建霖健康家居股份有限公司</span><span class="abs gc" style="left:202px;width:113px">2017-09</span><span class="abs gc" style="left:315px;width:147px">0</span><span class="abs gc" style="left:462px;width:140px">0</span><span class="abs gc" style="left:602px;width:139px">0</span><span class="abs gc" style="left:741px;width:140px">0</span></div>
<div class="abs grow alt" style="top:106.2px"><span class="abs gc rn" style="left:0px;width:27px">4</span><span class="abs gc" style="left:27px;width:175px">厦门建霖健康家居股份有限公司</span><span class="abs gc" style="left:202px;width:113px">2017-10</span><span class="abs gc" style="left:315px;width:147px">0</span><span class="abs gc" style="left:462px;width:140px">0</span><span class="abs gc" style="left:602px;width:139px">0</span><span class="abs gc" style="left:741px;width:140px">0</span></div>
<div class="abs vsb"><b class="abs" style="left:3px;top:6px;border:3.500px solid transparent;border-bottom:5px solid #a3a3a3;border-top:none"></b><i class="abs" style="left:2px;top:16px;width:11px;height:16px;background:#c1c1c1"></i><b class="abs" style="left:3px;bottom:6px;border:3.500px solid transparent;border-top:5px solid #505050;border-bottom:none"></b></div>
</div>
<div id="foot" class="abs"><span class="abs" style="left:8px">@2015-2020 湖南慧明达信息技术有限公司 版权所有</span><span class="abs" style="left:525px">注册用户<span lang="ja" class="cj">：</span>湖南长沙</span><a class="abs" style="left:1036px">密码锁管理</a><i class="abs" style="left:1108px"></i><a class="abs" style="left:1118px">读写器管理</a><i class="abs" style="left:1190px"></i><a class="abs" style="left:1200px">关于我们</a><i class="abs" style="left:1261px"></i><i class="abs" style="left:1276px;background:#777"></i></div>
</body>
</html>
